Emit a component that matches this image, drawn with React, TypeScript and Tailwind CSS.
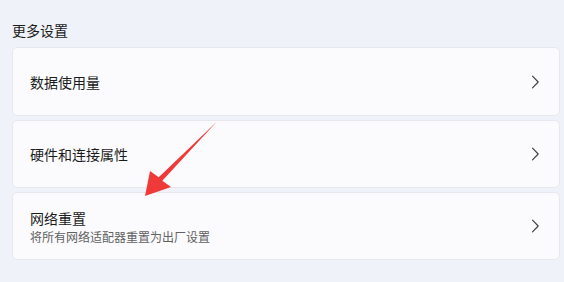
import React from "react";

const Chevron = () => (
  <svg width="16" height="16" viewBox="0 0 16 16" className="shrink-0">
    <path d="M5.5 2.2 L11.2 8 L5.5 13.8" fill="none" stroke="#3b3b3b" strokeWidth="1.1" strokeLinecap="round" strokeLinejoin="round" />
  </svg>
);

const Card = ({ title, sub, h }: { title: string; sub?: string; h: string }) => (
  <div className={`flex items-center justify-between rounded-[5px] border border-[#e6e8ee] bg-[#fbfbfd] pl-[17px] pr-[16px] ${h}`}>
    <div className="flex flex-col">
      <div className="text-[14px] leading-[20px] text-[#1b1b1b]">{title}</div>
      {sub && <div className="text-[12px] leading-[17px] text-[#616161]">{sub}</div>}
    </div>
    <Chevron />
  </div>
);

export default function App() {
  return (
    <div
      className="relative w-[564px] h-[282px] overflow-hidden bg-[#eff2f8] px-[12px] pt-[20px]"
      style={{ fontFamily: '"Noto Sans CJK SC", "Noto Sans", sans-serif' }}
    >
      <div className="text-[14px] leading-[20px] text-[#1b1b1b] mb-[7px]">更多设置</div>
      <div className="flex flex-col gap-[4px] w-[548px]">
        <Card title="数据使用量" h="h-[69px]" />
        <Card title="硬件和连接属性" h="h-[68px]" />
        <Card title="网络重置" sub="将所有网络适配器重置为出厂设置" h="h-[68px]" />
      </div>
      <svg className="absolute left-0 top-0 pointer-events-none" width="564" height="282" viewBox="0 0 564 282">
        <polygon
          points="217,121.5 162.3,180.7 171,187 145,196 150,171 158.7,177.3"
          fill="#f03a3a"
        />
      </svg>
    </div>
  );
}
